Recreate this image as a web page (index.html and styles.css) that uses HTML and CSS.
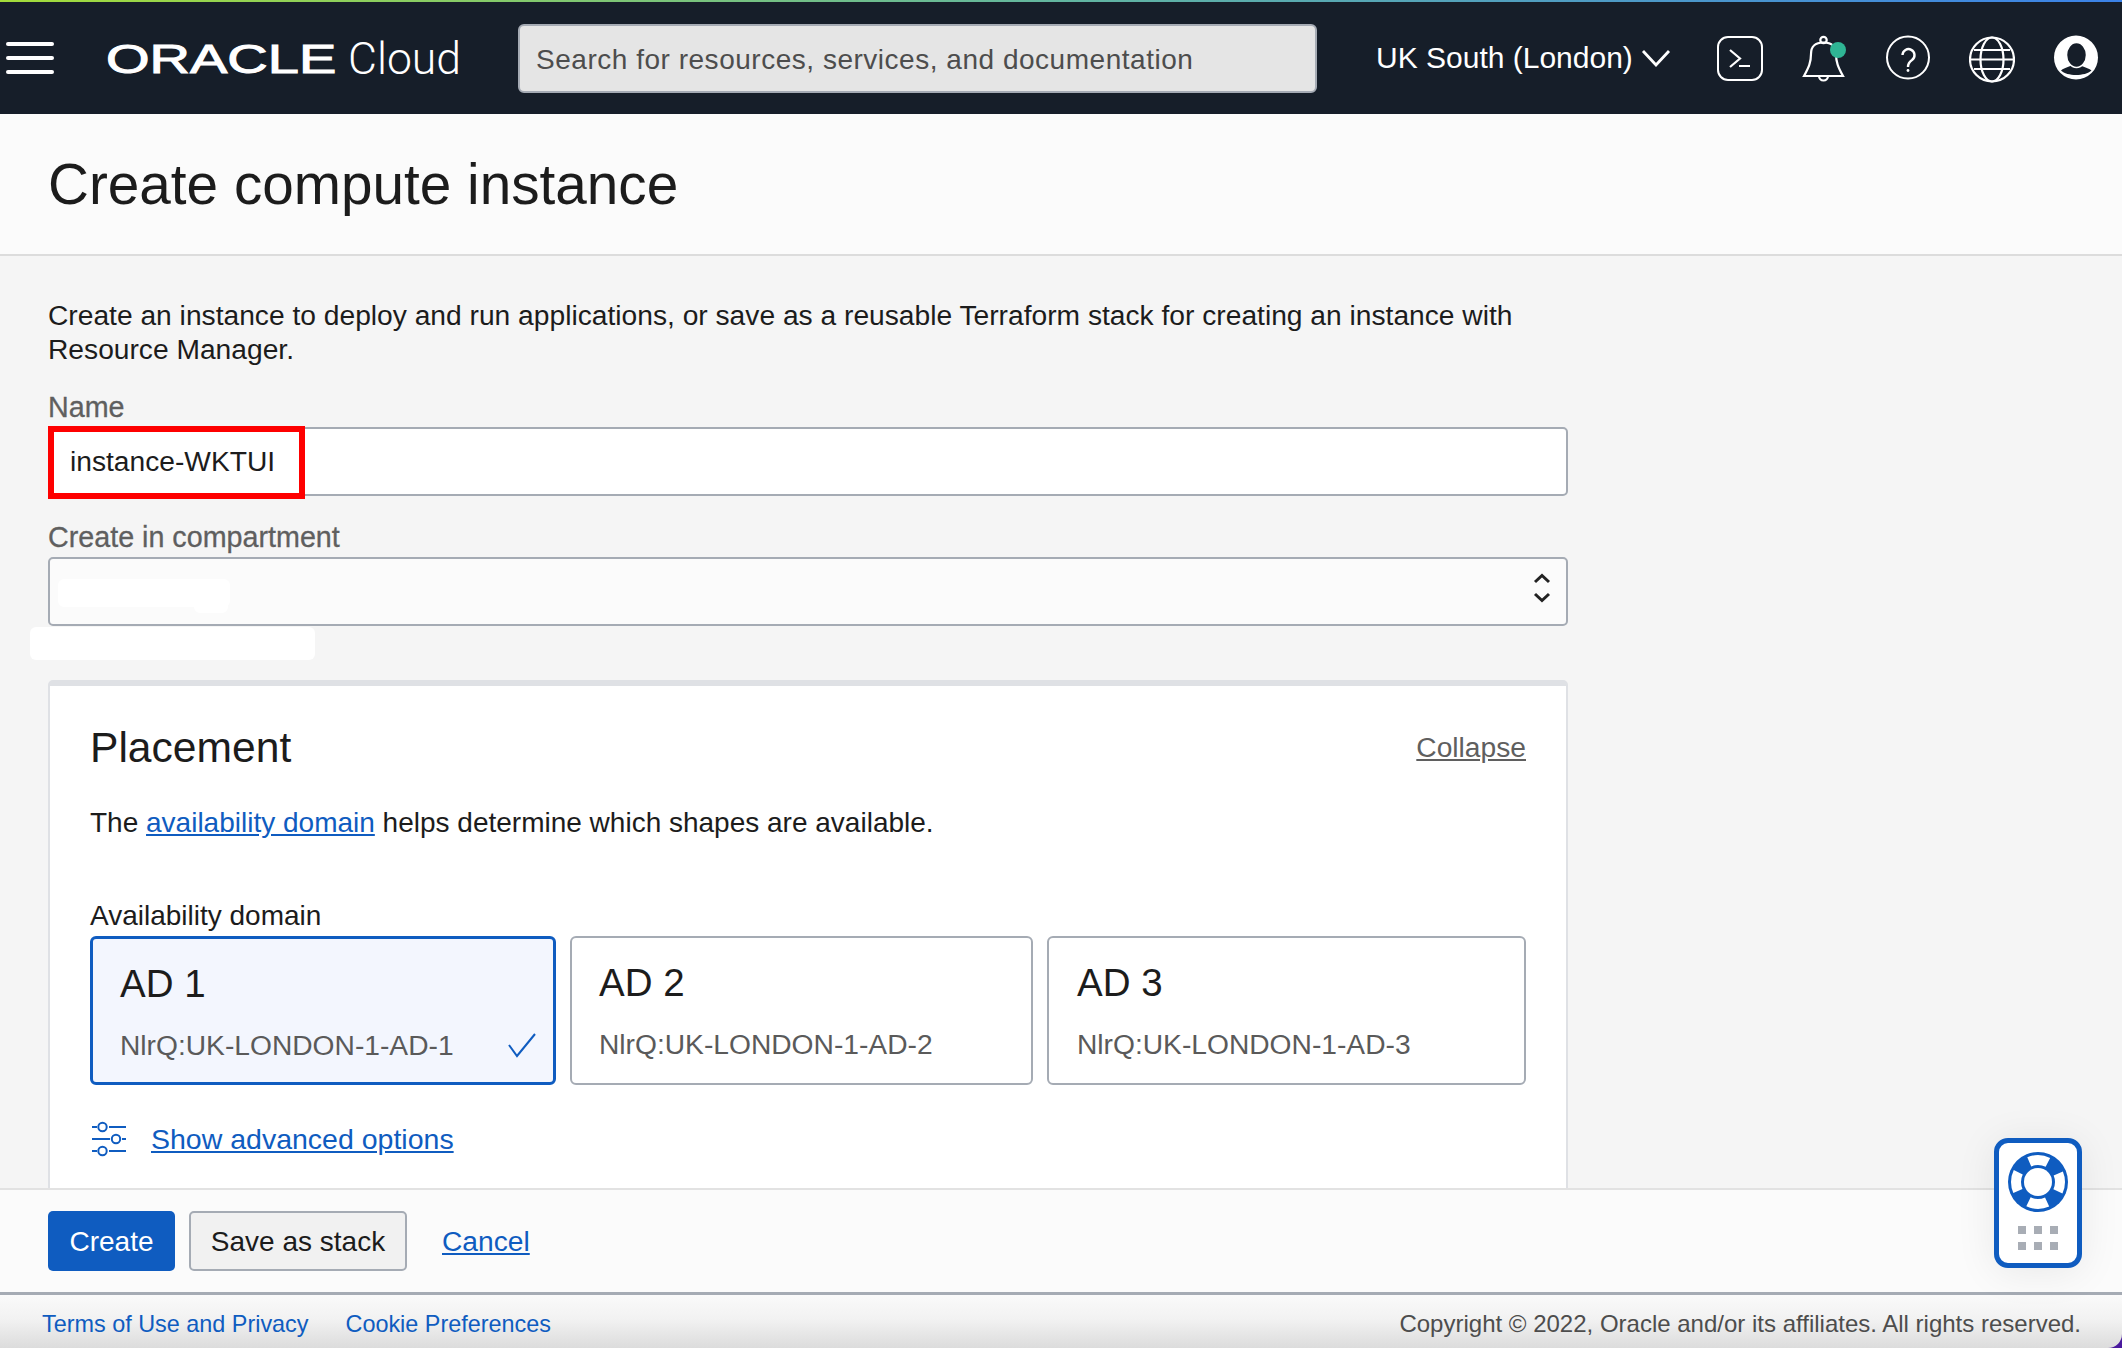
FILE: index.html
```html
<!DOCTYPE html>
<html lang="en">
  <head>
    <meta charset="UTF-8" />
    <title>Create compute instance</title>
    <link rel="stylesheet" href="styles.css">
  </head>
  <body>
    <div class="page">
      <div class="accent"></div>
      <header class="topbar">
        <div class="burger"><span></span><span></span><span></span></div>
        <div class="brand"><span class="wordmark">ORACLE</span><span class="cloud">Cloud</span></div>
        <div class="search">Search for resources, services, and documentation</div>
        <div class="region">UK South (London)
          <svg width="30" height="18" viewBox="0 0 30 18"><path d="M2 2 L15 16 L28 2" fill="none" stroke="#fff" stroke-width="2.800"/></svg>
        </div>
        <div class="tools">
          <svg width="46" height="50" viewBox="0 0 46 50" fill="none" stroke="#fff" stroke-width="2.2">
            <rect x="1" y="4" width="44" height="43" rx="10" stroke-width="2"/>
            <path d="M13 17 L23 25.5 L13 34 M22 33 H33"/>
          </svg>
          <svg width="46" height="50" viewBox="0 0 46 50" fill="none" stroke="#fff" stroke-width="2.2">
            <circle cx="22.5" cy="7" r="3.2"/>
            <path d="M3 43 C8 34 10 29 10 21 C10 13 15 9.5 22.5 9.5 C30 9.5 35 13 35 21 C35 29 37 34 42 43 Z"/>
            <path d="M18 43 a4.5 4.5 0 0 0 9 0"/>
            <circle cx="37" cy="17" r="8" fill="#2fb594" stroke="none"/>
          </svg>
          <svg width="46" height="50" viewBox="0 0 46 50" fill="none" stroke="#fff" stroke-width="2">
            <circle cx="23" cy="24.5" r="21"/>
            <path d="M17.500 22 a6 6 0 1 1 9.500 5 c-3 2 -4 3.500 -4 7" stroke-width="2.400"/>
            <circle cx="23" cy="37.500" r="1.400" fill="#fff" stroke="none"/>
          </svg>
          <svg width="46" height="50" viewBox="0 0 46 50" fill="none" stroke="#fff" stroke-width="2.2">
            <circle cx="23" cy="26.5" r="22"/>
            <ellipse cx="23" cy="26.5" rx="11.5" ry="22"/>
            <path d="M1 26.5 H45 M5 17 H41 M5 36 H41"/>
          </svg>
          <svg width="46" height="50" viewBox="0 0 46 50">
            <circle cx="23" cy="24.5" r="22" fill="#fff"/>
            <path d="M8 37.5 C12 34 17 34 23 30 C29 34 34 34 38.500 37.500 C32 43.500 14 43.500 8 37.500 Z" fill="#161e29"/>
            <ellipse cx="23.500" cy="22" rx="10" ry="12.500" fill="#161e29" stroke="#fff" stroke-width="1.500"/>
          </svg>
        </div>
      </header>

      <div class="title-band">
        <h1>Create compute instance</h1>
      </div>

      <main class="main">
        <p class="intro">Create an instance to deploy and run applications, or save as a reusable Terraform stack for creating an instance with Resource Manager.</p>

        <div class="field">
          <label class="field-label">Name</label>
          <div class="control name-control">instance-WKTUI<span class="red-box"></span></div>
        </div>

        <div class="field">
          <label class="field-label">Create in compartment</label>
          <div class="control select-control">
            <span class="blot blot-one"></span>
            <span class="blot blot-notch"></span>
            <span class="blot blot-two"></span>
            <svg class="updown" width="18" height="30" viewBox="0 0 18 30" fill="none" stroke="#222" stroke-width="3">
              <path d="M2 9 L9 2.500 L16 9 M2 21 L9 27.500 L16 21"/>
            </svg>
          </div>
        </div>

        <section class="card">
          <div class="card-head">
            <h2>Placement</h2>
            <a class="collapse">Collapse</a>
          </div>
          <p class="card-desc">The <a class="link">availability domain</a> helps determine which shapes are available.</p>
          <div class="ad-label">Availability domain</div>
          <div class="ad-row">
            <div class="ad ad-one selected">
              <div class="ad-name">AD 1</div>
              <div class="ad-sub">NlrQ:UK-LONDON-1-AD-1
                <svg width="30" height="26" viewBox="0 0 30 26" fill="none" stroke="#0f5cc0" stroke-width="2"><path d="M2 13 L10 24 L28 2"/></svg>
              </div>
            </div>
            <div class="ad ad-two">
              <div class="ad-name">AD 2</div>
              <div class="ad-sub">NlrQ:UK-LONDON-1-AD-2</div>
            </div>
            <div class="ad ad-three">
              <div class="ad-name">AD 3</div>
              <div class="ad-sub">NlrQ:UK-LONDON-1-AD-3</div>
            </div>
          </div>
          <div class="advanced">
            <svg width="36" height="36" viewBox="0 0 36 36" fill="none" stroke="#0f5cc0" stroke-width="2">
              <path d="M1 6 H6 M18 6 H35 M1 18 H19 M31 18 H35 M1 30 H6 M18 30 H35"/>
              <circle cx="11.500" cy="6" r="4.200"/>
              <circle cx="25" cy="18" r="4.200"/>
              <circle cx="11.500" cy="30" r="4.200"/>
            </svg>
            <a class="link">Show advanced options</a>
          </div>
        </section>
      </main>

      <div class="actions">
        <button class="btn btn-primary">Create</button>
        <button class="btn btn-plain">Save as stack</button>
        <a class="link cancel">Cancel</a>
      </div>

      <div class="foot-wrap">
        <footer class="foot">
          <a class="foot-link">Terms of Use and Privacy</a>
          <a class="foot-link">Cookie Preferences</a>
          <span class="copyright">Copyright © 2022, Oracle and/or its affiliates. All rights reserved.</span>
        </footer>
      </div>

      <div class="help">
        <svg width="60" height="60" viewBox="0 0 60 60">
          <circle cx="30" cy="30" r="30" fill="#0f5cc0"/>
          <circle cx="30" cy="30" r="22" fill="none" stroke="#fff" stroke-width="10" stroke-dasharray="19.200 15.350" stroke-dashoffset="9.600"/>
          <circle cx="30" cy="30" r="14" fill="#fff"/>
        </svg>
        <div class="help-dots">
          <span></span><span></span><span></span>
          <span></span><span></span><span></span>
        </div>
      </div>
    </div>
  </body>
</html>
```

FILE: styles.css
```css
* {
  box-sizing: border-box;
}
html, body {
  margin: 0;
  padding: 0;
}
body {
  font-family: "Liberation Sans", Arial, sans-serif;
  font-size: 28.2px;
  color: #1c1c1c;
  background: #fff;
}
.page {
  position: relative;
  display: flex;
  flex-direction: column;
  width: 2122px;
  height: 1348px;
  overflow: hidden;
  background: #f5f5f5;
}
.accent {
  height: 2px;
  flex: none;
  background: linear-gradient(90deg, #a3dc3a 0%, #62b6a0 50%, #3b82e8 100%);
}

/* top bar */
.topbar {
  display: flex;
  align-items: center;
  flex: none;
  height: 112px;
  padding-left: 6px;
  background: #161e29;
  color: #fff;
}
.burger {
  display: flex;
  flex-direction: column;
  gap: 10px;
  width: 48px;
}
.burger span {
  height: 4px;
  border-radius: 2px;
  background: #fff;
}
.brand {
  display: flex;
  align-items: center;
  width: 412px;
  margin-left: 52px;
}
.wordmark {
  display: inline-block;
  width: 242px;
  padding-top: 2px;
  font-size: 40px;
  line-height: 44px;
  -webkit-text-stroke: 1px #fff;
  transform: scaleX(1.400);
  transform-origin: left center;
}
.cloud {
  padding-top: 2px;
  font-family: Roboto, sans-serif;
  font-weight: 300;
  font-size: 44.5px;
  line-height: 50px;
}
.search {
  flex: none;
  width: 799px;
  height: 69px;
  padding-left: 16px;
  line-height: 68px;
  font-size: 28px;
  letter-spacing: 0.52px;
  color: #4d4d4d;
  background: #e5e5e5;
  border: 2px solid #a5abb4;
  border-radius: 6px;
}
.region {
  display: flex;
  align-items: center;
  gap: 8px;
  margin-left: 59px;
  font-size: 30px;
  white-space: nowrap;
}
.tools {
  display: flex;
  gap: 38px;
  margin-left: auto;
  padding-right: 23px;
}

/* title */
.title-band {
  flex: none;
  height: 142px;
  padding: 0 48px;
  background: #fbfbfb;
  border-bottom: 2px solid #dcdcdc;
}
h1 {
  margin: 0;
  font-size: 56.7px;
  font-weight: 400;
  line-height: 142px;
}

/* form */
.main {
  flex: 1;
  min-height: 0;
  overflow: hidden;
  padding: 42px 554px 0 48px;
}
.intro {
  margin: 0;
  line-height: 34px;
}
.field {
  position: relative;
  margin-top: 26px;
}
.field-label {
  display: block;
  margin-bottom: 5px;
  font-size: 28.7px;
  line-height: 30px;
  color: #5f5f5f;
  -webkit-text-stroke: 0.3px #5f5f5f;
}
.control {
  position: relative;
  height: 69px;
  padding-left: 20px;
  line-height: 65px;
  background: #fff;
  border: 2px solid #a5abb4;
  border-radius: 5px;
}
.red-box {
  position: absolute;
  left: -2px;
  top: -3px;
  width: 257px;
  height: 73px;
  border: 6px solid #fe0000;
}
.select-control {
  background: #fbfbfb;
}
.updown {
  position: absolute;
  right: 15px;
  top: 14px;
}
.blot {
  position: absolute;
  background: #fff;
  border-radius: 6px;
}
.blot-one {
  left: 8px;
  top: 20px;
  width: 172px;
  height: 28px;
}
.blot-notch {
  left: 144px;
  top: 40px;
  width: 34px;
  height: 14px;
}
.blot-two {
  left: -20px;
  top: 68px;
  width: 285px;
  height: 33px;
}
.card {
  height: 700px;
  margin-top: 54px;
  padding: 0 40px;
  background: #fff;
  border: 2px solid #dfe1e5;
  border-top-width: 6px;
  border-radius: 5px 5px 0 0;
}
.card-head {
  display: flex;
  align-items: center;
  justify-content: space-between;
  padding-top: 34px;
}
h2 {
  margin: 0;
  font-size: 42.6px;
  font-weight: 400;
  line-height: 54px;
}
.collapse {
  color: #5f5f5f;
  text-decoration: underline;
}
.card-desc {
  margin: 32px 0 0;
  font-size: 28px;
  line-height: 34px;
}
.link {
  color: #0f5cc0;
  text-decoration: underline;
}
.ad-label {
  margin-top: 59px;
  font-size: 28px;
  line-height: 34px;
}
.ad-row {
  display: flex;
  gap: 14px;
  margin-top: 3px;
}
.ad {
  flex: none;
  height: 149px;
  padding: 22px 27px 0;
  background: #fff;
  border: 2px solid #a5abb4;
  border-radius: 6px;
}
.ad-one {
  width: 466px;
}
.ad-two {
  width: 463px;
}
.ad-three {
  width: 479px;
  padding-left: 28px;
}
.selected {
  background: #f3f6fe;
  border: 3px solid #0f5cc0;
}
.ad-name {
  font-size: 38.5px;
  line-height: 46px;
}
.ad-sub {
  display: flex;
  align-items: center;
  justify-content: space-between;
  margin-top: 21px;
  line-height: 34px;
  color: #5a5a5a;
}
.ad-sub svg {
  margin-right: -11px;
}
.advanced {
  display: flex;
  align-items: center;
  gap: 24px;
  margin-top: 36px;
  margin-left: 1px;
  font-size: 28.5px;
}

/* bottom */
.actions {
  display: flex;
  align-items: center;
  flex: none;
  gap: 14px;
  height: 104px;
  padding: 0 48px;
  background: #fbfbfb;
  border-top: 2px solid #e2e2e2;
}
.btn {
  height: 60px;
  padding-top: 3px;
  font-family: inherit;
  font-size: 28px;
  border-radius: 5px;
}
.btn-primary {
  width: 127px;
  color: #fff;
  background: #0f5cc0;
  border: none;
}
.btn-plain {
  width: 218px;
  color: #1c1c1c;
  background: #f1f1f1;
  border: 2px solid #a5abb4;
}
.cancel {
  margin-left: 21px;
}
.foot-wrap {
  flex: none;
  height: 56px;
  background: #4a1a9e;
}
.foot {
  display: flex;
  align-items: center;
  gap: 37px;
  height: 56px;
  padding: 4px 41px 0 42px;
  font-size: 24px;
  background: linear-gradient(180deg, #fafafa 0%, #f2f2f2 45%, #dcdcdc 100%);
  border-top: 3px solid #a5abb4;
  border-bottom-right-radius: 14px;
}
.foot-link {
  padding-top: 2px;
  font-size: 23.4px;
  color: #0f5cc0;
}
.copyright {
  margin-left: auto;
  color: #4d4d4d;
}

/* floating help */
.help {
  position: absolute;
  left: 1994px;
  top: 1138px;
  display: flex;
  flex-direction: column;
  align-items: center;
  width: 88px;
  height: 130px;
  padding-top: 9px;
  background: #fff;
  border: 5px solid #0f5cc0;
  border-radius: 14px;
  box-shadow: 0 4px 40px rgba(0, 0, 0, 0.08);
}
.help-dots {
  display: grid;
  grid-template-columns: repeat(3, 8px);
  gap: 8px;
  margin-top: 14px;
}
.help-dots span {
  height: 8px;
  background: #a8adb5;
}
```
